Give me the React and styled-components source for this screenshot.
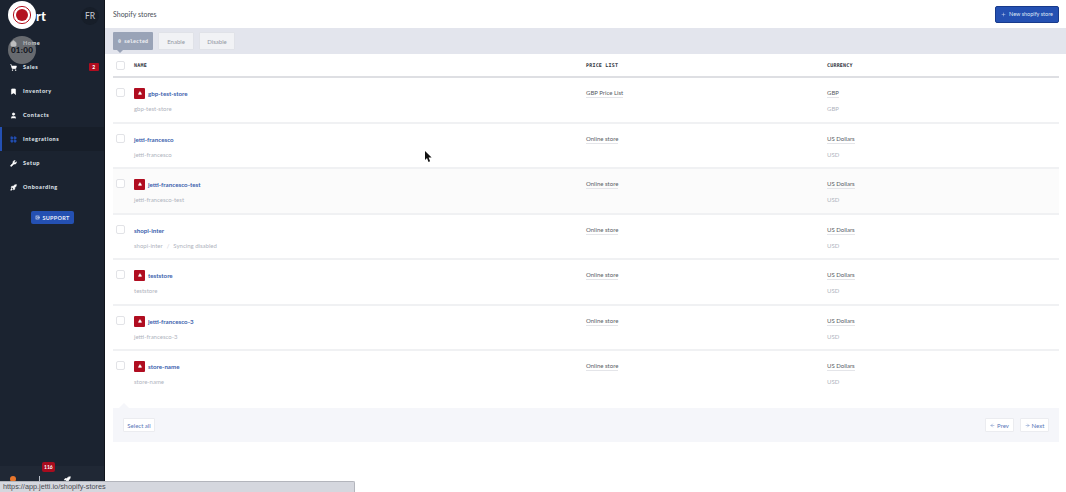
import styled, { createGlobalStyle } from 'styled-components';
import { Home, ShoppingCart, Bookmark, User, LayoutGrid, Wrench, Rocket, LifeBuoy, Plus, ArrowLeft, ArrowRight, Triangle } from 'lucide-react';

const GlobalStyle = createGlobalStyle`
  html, body {
    margin: 0;
    height: 100%;
    overflow: hidden;
    background: #fff;
    font-family: Lato, "Liberation Sans", sans-serif;
  }
  #root {
    height: 100%;
  }
`;

const Page = styled.div`
  display: flex;
  height: 492px;
  position: relative;
  overflow: hidden;
`;

const Sidebar = styled.aside`
  background: #1b2330;
  border-right: 1px solid #10141c;
  box-sizing: border-box;
  display: flex;
  flex-direction: column;
  flex: 0 0 105px;
  height: 100%;
`;
const Brand = styled.div`
  align-items: center;
  display: flex;
  height: 31px;
  justify-content: space-between;
  padding: 0 5px 0 36px;
`;
const Logo = styled.span`
  color: #fff;
  font-size: 13px;
  font-weight: 900;
`;
const Lang = styled.span`
  align-items: center;
  background: #171e29;
  border-radius: 50%;
  color: #c8ccd4;
  display: flex;
  font-size: 8.5px;
  height: 18px;
  justify-content: center;
  width: 18px;
`;
const Nav = styled.nav`
  display: flex;
  flex-direction: column;
`;
const NavItem = styled.a`
  align-items: center;
  background: ${p => (p.$active ? '#171e29' : 'transparent')};
  border-left: 2px solid ${p => (p.$active ? '#2450b2' : 'transparent')};
  color: #dfe2e8;
  display: flex;
  font-size: 5.5px;
  font-weight: 900;
  gap: 6px;
  height: 24px;
  letter-spacing: 0.55px;
  padding-left: 8px;
  position: relative;
  svg {
    color: ${p => (p.$active ? '#2450b2' : '#fff')};
    fill: currentColor;
    flex: none;
  }
`;
const Count = styled.span`
  background: #b00d20;
  border-radius: 1px;
  color: #fff;
  font-size: 5px;
  height: 8px;
  line-height: 8px;
  position: absolute;
  right: 5px;
  text-align: center;
  top: 8px;
  width: 10px;
`;
const Support = styled.button`
  align-items: center;
  align-self: flex-start;
  background: #2450b2;
  border: 0;
  border-radius: 2px;
  color: #e9edf8;
  display: flex;
  font-family: Lato, sans-serif;
  font-size: 5.5px;
  font-weight: 700;
  gap: 2px;
  height: 13px;
  justify-content: center;
  letter-spacing: 0.3px;
  margin: 12px 0 0 31px;
  padding: 0;
  width: 43px;
`;
const SideFooter = styled.div`
  align-items: flex-end;
  background: #202835;
  display: flex;
  gap: 23px;
  height: 26px;
  margin-top: auto;
  padding: 0 0 0 10px;
  position: relative;
`;
const Dot = styled.span`
  background: #e8762c;
  border-radius: 50%;
  height: 6px;
  margin-bottom: 10px;
  width: 6px;
`;
const Tick = styled.span`
  background: #b7bcc6;
  height: 5px;
  margin-bottom: 11px;
  width: 1px;
`;
const RocketMark = styled.span`
  color: #fff;
  line-height: 0;
  margin-bottom: 8px;
  svg {
    fill: currentColor;
  }
`;
const Alerts = styled.span`
  background: #a80c1e;
  border-radius: 2px;
  color: #fff;
  font-size: 5px;
  font-weight: 700;
  left: 42px;
  line-height: 10px;
  padding: 0 2px;
  position: absolute;
  top: -4px;
`;

const Main = styled.main`
  display: flex;
  flex: 1;
  flex-direction: column;
  min-width: 0;
`;
const Header = styled.header`
  align-items: center;
  display: flex;
  height: 28px;
  justify-content: space-between;
  padding: 0 7px 0 8px;
`;
const Title = styled.h1`
  color: #4a4f58;
  font-size: 7px;
  font-weight: 400;
  margin: 0;
`;
const NewButton = styled.button`
  align-items: center;
  background: #2450b2;
  border: 1px solid #173a8c;
  border-radius: 2px;
  color: #dfe5f5;
  display: flex;
  font-family: Lato, sans-serif;
  font-size: 5.5px;
  gap: 3px;
  height: 17px;
  justify-content: center;
  padding: 0;
  width: 64px;
`;
const Toolbar = styled.div`
  align-items: center;
  background: #e3e5ed;
  display: flex;
  gap: 5px;
  height: 26px;
  padding: 0 0 0 8px;
`;
const Selected = styled.span`
  align-items: center;
  background: #99a3b7;
  border-radius: 1px;
  color: #eef0f4;
  display: flex;
  font-family: "DejaVu Sans Mono", monospace;
  font-size: 5px;
  font-weight: 700;
  height: 18px;
  justify-content: center;
  position: relative;
  width: 40px;
  &::after {
    border-left: 3px solid transparent;
    border-right: 3px solid transparent;
    border-top: 3px solid #99a3b7;
    bottom: -3px;
    content: '';
    left: 4px;
    position: absolute;
  }
`;
const ToolButton = styled.button`
  background: #f1f2f5;
  border: 1px solid #e0e2e8;
  border-radius: 1px;
  color: #9297a2;
  font-family: Lato, sans-serif;
  font-size: 6px;
  height: 18px;
  padding: 0;
  width: 36px;
`;

const Table = styled.div`
  display: flex;
  flex-direction: column;
  margin: 0 7px 0 8px;
`;
const Grid = styled.div`
  display: grid;
  grid-template-columns: 21px 452px 241px 1fr;
`;
const HeadRow = styled(Grid)`
  align-items: center;
  border-bottom: 2px solid #dedfe3;
  box-sizing: border-box;
  height: 24px;
`;
const HeadCell = styled.span`
  color: #30343c;
  font-family: "DejaVu Sans Mono", monospace;
  font-size: 5px;
  font-weight: 700;
  letter-spacing: 0.2px;
`;
const Row = styled(Grid)`
  background: ${p => (p.$shaded ? '#fbfbfb' : '#fff')};
  border-bottom: 2px solid #f0f1f3;
  box-sizing: border-box;
  height: ${p => p.$h}px;
  padding-top: 10px;
  &:last-child {
    border-bottom: 0;
  }
`;
const Check = styled.span`
  background: #fff;
  border: 1px solid #e2e3e7;
  border-radius: 2px;
  box-sizing: border-box;
  display: block;
  height: 9px;
  margin-left: 3px;
  width: 9px;
`;
const Cell = styled.div`
  display: flex;
  flex-direction: column;
  gap: 7px;
`;
const NameLine = styled.div`
  align-items: center;
  display: flex;
  gap: 3px;
  height: 10px;
`;
const Warn = styled.span`
  align-items: center;
  background: #b00d20;
  border-radius: 1px;
  color: #fff;
  display: flex;
  height: 11px;
  justify-content: center;
  width: 11px;
  svg {
    fill: currentColor;
  }
`;
const StoreLink = styled.a`
  color: #3c5fae;
  font-size: 6.2px;
  font-weight: 700;
`;
const Sub = styled.div`
  color: #b0b4be;
  font-size: 6px;
  line-height: 8px;
`;
const Soft = styled.span`
  color: #cdd0d7;
  margin: 0 4px;
`;
const Value = styled.span`
  align-self: flex-start;
  border-bottom: 1px solid #e4e5e9;
  color: #585c64;
  font-size: 6px;
  height: 9px;
  line-height: 9px;
`;

const Footer = styled.div`
  align-items: center;
  background: #f5f6fa;
  display: flex;
  height: 34px;
  justify-content: space-between;
  margin: 11px 7px 0 8px;
  padding: 0 10px;
  position: relative;
  &::before {
    border-bottom: 5px solid #f5f6fa;
    border-left: 5px solid transparent;
    border-right: 5px solid transparent;
    content: '';
    left: 6px;
    position: absolute;
    top: -5px;
  }
`;
const Pager = styled.div`
  display: flex;
  gap: 6px;
`;
const PageButton = styled.button`
  align-items: center;
  background: #fff;
  border: 1px solid #ebecf0;
  border-radius: 1px;
  color: #5876b8;
  display: flex;
  font-family: Lato, sans-serif;
  font-size: 6px;
  gap: 2px;
  height: 14px;
  justify-content: center;
  padding: 0;
  width: ${p => p.$w}px;
`;

const RecordButton = styled.div`
  align-items: center;
  background: #fff;
  border-radius: 50%;
  display: flex;
  height: 28px;
  justify-content: center;
  left: 8px;
  position: absolute;
  top: 1px;
  width: 28px;
`;
const Timer = styled.div`
  align-items: center;
  background: rgba(150, 150, 150, 0.62);
  border-radius: 50%;
  color: #11151c;
  display: flex;
  font-family: Lato, sans-serif;
  font-size: 8px;
  font-weight: 900;
  height: 28px;
  justify-content: center;
  left: 8px;
  letter-spacing: 0.3px;
  position: absolute;
  top: 36px;
  width: 28px;
`;
const StatusBar = styled.div`
  background: #d5d7de;
  border: 1px solid #b3b5bc;
  border-bottom: 0;
  border-left: 0;
  border-top-right-radius: 2px;
  box-sizing: border-box;
  color: #4a4c52;
  font-family: "Liberation Sans", sans-serif;
  font-size: 7.3px;
  height: 11px;
  left: 0;
  line-height: 10px;
  padding-left: 3px;
  position: absolute;
  top: 481px;
  width: 355px;
`;
const Cursor = styled.svg`
  left: 424px;
  position: absolute;
  top: 151px;
`;

const stores = [
  { name: 'gbp-test-store', sub: 'gbp-test-store', price: 'GBP Price List', cur: 'GBP', iso: 'GBP', warn: true, h: 46 },
  { name: 'jetti-francesco', sub: 'jetti-francesco', price: 'Online store', cur: 'US Dollars', iso: 'USD', h: 45 },
  { name: 'jetti-francesco-test', sub: 'jetti-francesco-test', price: 'Online store', cur: 'US Dollars', iso: 'USD', warn: true, shaded: true, h: 46 },
  { name: 'shopi-inter', sub: 'shopi-inter', disabled: true, price: 'Online store', cur: 'US Dollars', iso: 'USD', h: 45 },
  { name: 'teststore', sub: 'teststore', price: 'Online store', cur: 'US Dollars', iso: 'USD', warn: true, h: 46 },
  { name: 'jetti-francesco-3', sub: 'jetti-francesco-3', price: 'Online store', cur: 'US Dollars', iso: 'USD', warn: true, h: 45 },
  { name: 'store-name', sub: 'store-name', price: 'Online store', cur: 'US Dollars', iso: 'USD', warn: true, h: 46 },
];

const navItems = [
  { label: 'Home', Icon: Home },
  { label: 'Sales', Icon: ShoppingCart, count: 2 },
  { label: 'Inventory', Icon: Bookmark },
  { label: 'Contacts', Icon: User },
  { label: 'Integrations', Icon: LayoutGrid, active: true },
  { label: 'Setup', Icon: Wrench },
  { label: 'Onboarding', Icon: Rocket },
];

const App = () => (
  <Page>
    <GlobalStyle />
    <Sidebar>
      <Brand>
        <Logo>rt</Logo>
        <Lang>FR</Lang>
      </Brand>
      <Nav>
        {navItems.map(({ label, Icon, count, active }) => (
          <NavItem key={label} $active={active}>
            <Icon size={7} strokeWidth={2} />
            {label}
            {count && <Count>{count}</Count>}
          </NavItem>
        ))}
      </Nav>
      <Support>
        <LifeBuoy size={5} />
        SUPPORT
      </Support>
      <SideFooter>
        <Dot />
        <Tick />
        <RocketMark>
          <Rocket size={8} />
        </RocketMark>
        <Alerts>116</Alerts>
      </SideFooter>
    </Sidebar>
    <Main>
      <Header>
        <Title>Shopify stores</Title>
        <NewButton>
          <Plus size={5} />
          New shopify store
        </NewButton>
      </Header>
      <Toolbar>
        <Selected>0 selected</Selected>
        <ToolButton>Enable</ToolButton>
        <ToolButton>Disable</ToolButton>
      </Toolbar>
      <Table>
        <HeadRow>
          <Check />
          <HeadCell>NAME</HeadCell>
          <HeadCell>PRICE LIST</HeadCell>
          <HeadCell>CURRENCY</HeadCell>
        </HeadRow>
        {stores.map(s => (
          <Row key={s.name} $shaded={s.shaded} $h={s.h}>
            <Check />
            <Cell>
              <NameLine>
                {s.warn && (
                  <Warn>
                    <Triangle size={4} />
                  </Warn>
                )}
                <StoreLink>{s.name}</StoreLink>
              </NameLine>
              <Sub>
                {s.sub}
                {s.disabled && (
                  <>
                    <Soft>/</Soft>Syncing disabled
                  </>
                )}
              </Sub>
            </Cell>
            <Cell>
              <Value>{s.price}</Value>
            </Cell>
            <Cell>
              <Value>{s.cur}</Value>
              <Sub>{s.iso}</Sub>
            </Cell>
          </Row>
        ))}
      </Table>
      <Footer>
        <PageButton $w={32}>Select all</PageButton>
        <Pager>
          <PageButton $w={29}>
            <ArrowLeft size={5} />
            Prev
          </PageButton>
          <PageButton $w={29}>
            <ArrowRight size={5} />
            Next
          </PageButton>
        </Pager>
      </Footer>
    </Main>
    <RecordButton>
      <svg width="20" height="20" viewBox="0 0 20 20">
        <circle cx="10" cy="10" r="8.6" fill="none" stroke="#b3121f" strokeWidth="1" />
        <circle cx="10" cy="10" r="6" fill="#b3121f" />
      </svg>
    </RecordButton>
    <Timer>01:00</Timer>
    <Cursor width="9" height="12" viewBox="0 0 9 12">
      <path d="M1 0v9l2-2 1.5 4 1.6-.7L4.6 6.6H7.6z" fill="#111" />
    </Cursor>
    <StatusBar>https://app.jetti.io/shopify-stores</StatusBar>
  </Page>
);

export default App;
